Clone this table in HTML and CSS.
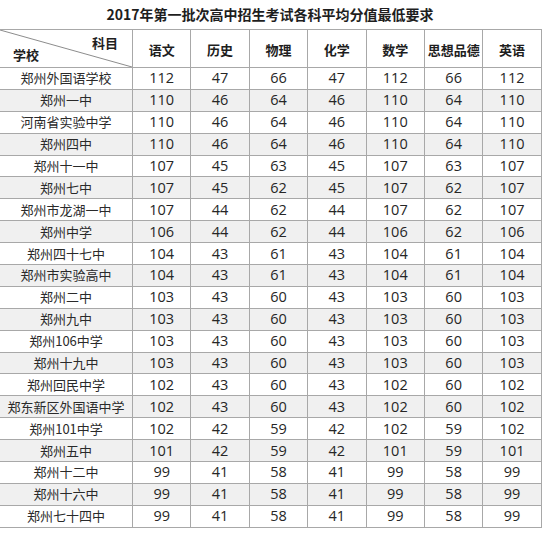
FILE: index.html
```html
<!DOCTYPE html>
<html lang="zh">
<head>
<meta charset="utf-8">
<link rel="stylesheet" href="styles.css">
</head>
<body>
<div class="title">2017年第一批次高中招生考试各科平均分值最低要求</div>
<table class="scores">
<colgroup>
<col class="c-school"><col class="c-sub"><col class="c-sub"><col class="c-sub"><col class="c-sub"><col class="c-sub"><col class="c-sub"><col class="c-sub">
</colgroup>
<thead>
<tr>
<th class="corner">
<svg class="diag" viewBox="0 0 132 38" preserveAspectRatio="none"><line x1="0" y1="0" x2="132" y2="38" stroke="#8a8a8a" stroke-width="1"/></svg>
<span class="k-subject">科目</span>
<span class="k-school">学校</span>
</th>
<th>语文</th><th>历史</th><th>物理</th><th>化学</th><th>数学</th><th>思想品德</th><th>英语</th>
</tr>
</thead>
<tbody>
<tr><td class="name">郑州外国语学校</td><td>112</td><td>47</td><td>66</td><td>47</td><td>112</td><td>66</td><td>112</td></tr>
<tr><td class="name">郑州一中</td><td>110</td><td>46</td><td>64</td><td>46</td><td>110</td><td>64</td><td>110</td></tr>
<tr><td class="name">河南省实验中学</td><td>110</td><td>46</td><td>64</td><td>46</td><td>110</td><td>64</td><td>110</td></tr>
<tr><td class="name">郑州四中</td><td>110</td><td>46</td><td>64</td><td>46</td><td>110</td><td>64</td><td>110</td></tr>
<tr><td class="name">郑州十一中</td><td>107</td><td>45</td><td>63</td><td>45</td><td>107</td><td>63</td><td>107</td></tr>
<tr><td class="name">郑州七中</td><td>107</td><td>45</td><td>62</td><td>45</td><td>107</td><td>62</td><td>107</td></tr>
<tr><td class="name">郑州市龙湖一中</td><td>107</td><td>44</td><td>62</td><td>44</td><td>107</td><td>62</td><td>107</td></tr>
<tr><td class="name">郑州中学</td><td>106</td><td>44</td><td>62</td><td>44</td><td>106</td><td>62</td><td>106</td></tr>
<tr><td class="name">郑州四十七中</td><td>104</td><td>43</td><td>61</td><td>43</td><td>104</td><td>61</td><td>104</td></tr>
<tr><td class="name">郑州市实验高中</td><td>104</td><td>43</td><td>61</td><td>43</td><td>104</td><td>61</td><td>104</td></tr>
<tr><td class="name">郑州二中</td><td>103</td><td>43</td><td>60</td><td>43</td><td>103</td><td>60</td><td>103</td></tr>
<tr><td class="name">郑州九中</td><td>103</td><td>43</td><td>60</td><td>43</td><td>103</td><td>60</td><td>103</td></tr>
<tr><td class="name">郑州106中学</td><td>103</td><td>43</td><td>60</td><td>43</td><td>103</td><td>60</td><td>103</td></tr>
<tr><td class="name">郑州十九中</td><td>103</td><td>43</td><td>60</td><td>43</td><td>103</td><td>60</td><td>103</td></tr>
<tr><td class="name">郑州回民中学</td><td>102</td><td>43</td><td>60</td><td>43</td><td>102</td><td>60</td><td>102</td></tr>
<tr><td class="name">郑东新区外国语中学</td><td>102</td><td>43</td><td>60</td><td>43</td><td>102</td><td>60</td><td>102</td></tr>
<tr><td class="name">郑州101中学</td><td>102</td><td>42</td><td>59</td><td>42</td><td>102</td><td>59</td><td>102</td></tr>
<tr><td class="name">郑州五中</td><td>101</td><td>42</td><td>59</td><td>42</td><td>101</td><td>59</td><td>101</td></tr>
<tr><td class="name">郑州十二中</td><td>99</td><td>41</td><td>58</td><td>41</td><td>99</td><td>58</td><td>99</td></tr>
<tr><td class="name">郑州十六中</td><td>99</td><td>41</td><td>58</td><td>41</td><td>99</td><td>58</td><td>99</td></tr>
<tr><td class="name">郑州七十四中</td><td>99</td><td>41</td><td>58</td><td>41</td><td>99</td><td>58</td><td>99</td></tr>
</tbody>
</table>
</body>
</html>
```
FILE: styles.css
```css
html, body {
  margin: 0;
  padding: 0;
  background: #ffffff;
}
body {
  width: 553px;
  height: 537px;
  overflow: hidden;
  font-family: "Noto Sans CJK SC", sans-serif;
  color: #222222;
}
.title {
  width: 540px;
  height: 29px;
  line-height: 29px;
  text-align: center;
  font-weight: bold;
  font-size: 14px;
  color: #1e1e1e;
}
.scores {
  border-collapse: collapse;
  table-layout: fixed;
  width: 542px;
  margin-left: -1px;
}
.c-school { width: 133px; }
.c-sub { width: 58.4px; }
.scores th,
.scores td {
  border: 1px solid #a8a8a8;
  padding: 0;
  text-align: center;
  vertical-align: middle;
  white-space: nowrap;
  overflow: hidden;
}
.scores thead tr {
  height: 38px;
}
.scores th {
  font-size: 13px;
  font-weight: bold;
  color: #1e1e1e;
  padding-top: 1px;
}
.scores tbody tr {
  height: 21.9px;
}
.scores tbody tr:nth-child(even) td {
  background: #f0f0f0;
}
.scores td {
  font-family: "Open Sans", "Noto Sans", sans-serif;
  font-size: 14.5px;
  line-height: 20px;
  color: #262626;
}
.scores td.name {
  font-family: "Noto Sans CJK SC", sans-serif;
  font-size: 13px;
  color: #2a2a2a;
}
.corner {
  position: relative;
}
.diag {
  position: absolute;
  left: 0;
  top: 0;
  width: 100%;
  height: 100%;
}
.k-subject {
  position: absolute;
  right: 14px;
  top: 3px;
}
.k-school {
  position: absolute;
  left: 13px;
  bottom: 3px;
}
```
